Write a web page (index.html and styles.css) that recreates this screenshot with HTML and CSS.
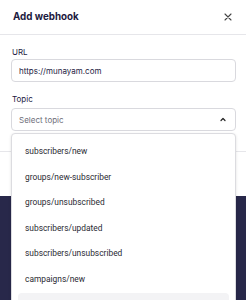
FILE: index.html
```html
<!DOCTYPE html>
<html lang="en">
<head>
  <meta charset="UTF-8">
  <meta name="viewport" content="width=device-width, initial-scale=1.0">
  <title>Add webhook</title>
  <link rel="stylesheet" href="styles.css">
</head>
<body>
  <div class="modal">
    <div class="modal-header">
      <h2>Add webhook</h2>
      <button class="close" type="button" aria-label="Close">
        <svg width="8" height="8" viewBox="0 0 8 8"><path d="M1 1L7 7M7 1L1 7" stroke="#444" stroke-width="1.1" stroke-linecap="round"/></svg>
      </button>
    </div>
    <div class="modal-body">
      <label class="field-label" for="url">URL</label>
      <input class="field" type="text" id="url" value="https://munayam.com">
      <label class="field-label" for="topic">Topic</label>
      <div class="select-wrap">
        <div class="select" id="topic">
          <span class="placeholder">Select topic</span>
          <svg width="6" height="5" viewBox="0 0 6 5"><path d="M1 3.5L3 1.5L5 3.5" fill="none" stroke="#222" stroke-width="1.2" stroke-linecap="round" stroke-linejoin="round"/></svg>
        </div>
        <!-- open dropdown -->
        <ul class="options">
          <li>subscribers/new</li>
          <li>groups/new-subscriber</li>
          <li>groups/unsubscribed</li>
          <li>subscribers/updated</li>
          <li>subscribers/unsubscribed</li>
          <li>campaigns/new</li>
          <li class="hover"></li>
        </ul>
      </div>
    </div>
    <div class="modal-footer"></div>
  </div>
  <div class="backdrop"></div>
</body>
</html>
```

FILE: styles.css
```css
body {
  margin: 0;
  padding: 0;
  background-color: #ffffff;
  font-family: Inter, "Noto Sans", sans-serif;
  overflow: hidden;
  height: 300px;
}
.modal {
  background-color: #ffffff;
}
.modal-header {
  height: 33px;
  display: flex;
  align-items: center;
  justify-content: space-between;
  padding: 0 14px 1px 13px;
  border-bottom: 1px solid #e6e6ea;
}
.modal-header h2 {
  margin: 0;
  font-size: 9.8px;
  font-weight: 700;
  color: #1d1b3f;
}
.close {
  background: none;
  border: none;
  padding: 0;
  display: flex;
  cursor: pointer;
}
.modal-body {
  padding: 10px 10px 20px 11px;
}
.field-label {
  display: block;
  font-size: 8px;
  color: #1d1b3f;
  line-height: 14px;
  padding-left: 1px;
}
.field {
  display: block;
  box-sizing: border-box;
  width: 100%;
  height: 23px;
  margin: 0 0 10px 0;
  padding: 0 7px;
  border: 1px solid #d9d9de;
  border-radius: 4px;
  font-family: inherit;
  font-size: 8px;
  color: #1d1b3f;
}
.select-wrap {
  position: relative;
  margin-top: 2px;
}
.select {
  box-sizing: border-box;
  height: 23px;
  display: flex;
  align-items: center;
  justify-content: space-between;
  padding: 0 9px 0 7px;
  border: 1px solid #d9d9de;
  border-radius: 4px;
  font-size: 8px;
}
.placeholder {
  color: #6f6f7a;
}
.options {
  position: absolute;
  top: 25px;
  left: 0;
  right: 0;
  margin: 0;
  padding: 5px 6px;
  list-style: none;
  background-color: #ffffff;
  border: 1px solid #dcdce0;
  border-radius: 4px;
  box-shadow: 0 1px 3px rgba(0, 0, 0, 0.12);
  font-family: Roboto, sans-serif;
  font-size: 8.4px;
  color: #2a2a33;
}
.options li {
  height: 25.6px;
  line-height: 25.6px;
  padding: 0 7px;
  border-radius: 4px;
}
.options li.hover {
  background-color: #f3f3f5;
}
.modal-footer {
  height: 44px;
  border-top: 1px solid #e6e6ea;
}
.backdrop {
  height: 120px;
  background-color: #28284a;
}
```
